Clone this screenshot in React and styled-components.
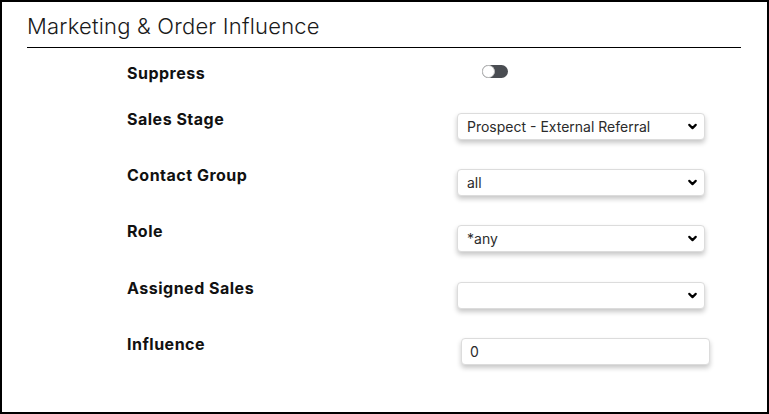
import React, { useState } from "react";
import styled, { createGlobalStyle } from "styled-components";
import { ChevronDown } from "lucide-react";

const GlobalStyle = createGlobalStyle`
  html, body {
    margin: 0;
    padding: 0;
    background: #fff;
  }
  body {
    font-family: Inter, "Noto Sans", sans-serif;
    color: #212529;
  }
`;

// Styled Components
const Frame = styled.section`
  box-sizing: border-box;
  width: 769px;
  height: 414px;
  border: 2px solid #000;
  padding: 10px 26px 0 25px;
`;

const Header = styled.h2`
  margin: 0;
  padding-bottom: 7px;
  border-bottom: 1px solid #000;
  font-family: Inter, sans-serif;
  font-weight: 300;
  font-size: 22px;
  line-height: 28px;
  letter-spacing: 0.2px;
  color: #1a1a1a;
`;

const Form = styled.div`
  display: flex;
  flex-direction: column;
  padding-left: 100px;
  margin-top: 17px;
`;

const Row = styled.div`
  display: grid;
  grid-template-columns: 330px 252px;
  align-items: start;
  margin-top: ${(p) => p.$gap || 0}px;
`;

const Label = styled.label`
  display: block;
  font-family: Inter, sans-serif;
  font-weight: 700;
  font-size: 16px;
  line-height: 16px;
  letter-spacing: 0.5px;
  color: #111;
  margin-top: ${(p) => p.$offset || 0}px;
`;

const Switch = styled.button`
  position: relative;
  width: 26px;
  height: 13px;
  margin-left: 25px;
  padding: 0;
  border: none;
  border-radius: 7px;
  background: #4a4d52;
  cursor: pointer;
`;

const Knob = styled.span`
  position: absolute;
  top: 0;
  left: ${(p) => (p.$on ? "13px" : "0")};
  box-sizing: border-box;
  width: 13px;
  height: 13px;
  border-radius: 50%;
  background: #fff;
  border: 1px solid #c4c4c4;
`;

const SelectWrap = styled.div`
  position: relative;
  width: 248px;
`;

const Select = styled.select`
  appearance: none;
  box-sizing: border-box;
  width: 248px;
  height: 27px;
  padding: 0 28px 0 9px;
  border: 1px solid #dcdcdc;
  border-radius: 4px;
  background: #fff;
  box-shadow: 0 3px 5px rgba(0, 0, 0, 0.22);
  font-family: Inter, sans-serif;
  font-size: 14px;
  color: #2b2b2b;
  outline: none;
`;

const Caret = styled(ChevronDown)`
  position: absolute;
  right: 6px;
  top: 7px;
  pointer-events: none;
  color: #000;
`;

const Input = styled.input`
  box-sizing: border-box;
  width: 249px;
  height: 27px;
  margin-left: 4px;
  padding: 0 8px;
  border: 1px solid #dcdcdc;
  border-radius: 4px;
  box-shadow: 0 3px 5px rgba(0, 0, 0, 0.22);
  font-family: Inter, sans-serif;
  font-size: 14px;
  color: #2b2b2b;
  outline: none;
`;

function Dropdown({ value, options }) {
  return (
    <SelectWrap>
      <Select defaultValue={value}>
        {options.map((o) => (
          <option key={o} value={o}>
            {o}
          </option>
        ))}
      </Select>
      <Caret size={13} strokeWidth={4} />
    </SelectWrap>
  );
}

export default function App() {
  const [suppress, setSuppress] = useState(false);

  return (
    <>
      <GlobalStyle />
      <Frame>
        <Header>Marketing &amp; Order Influence</Header>
        <Form>
          <Row>
            <Label>Suppress</Label>
            <Switch onClick={() => setSuppress(!suppress)} aria-label="Suppress">
              <Knob $on={suppress} />
            </Switch>
          </Row>
          <Row $gap={32}>
            <Label $offset={-2}>Sales Stage</Label>
            <Dropdown
              value="Prospect - External Referral"
              options={["Prospect - External Referral", "Prospect", "Customer"]}
            />
          </Row>
          <Row $gap={29}>
            <Label $offset={-2}>Contact Group</Label>
            <Dropdown value="all" options={["all"]} />
          </Row>
          <Row $gap={29}>
            <Label $offset={-2}>Role</Label>
            <Dropdown value="*any" options={["*any"]} />
          </Row>
          <Row $gap={30}>
            <Label $offset={-2}>Assigned Sales</Label>
            <Dropdown value="" options={[""]} />
          </Row>
          <Row $gap={29}>
            <Label $offset={-2}>Influence</Label>
            <Input type="text" defaultValue="0" />
          </Row>
        </Form>
      </Frame>
    </>
  );
}
